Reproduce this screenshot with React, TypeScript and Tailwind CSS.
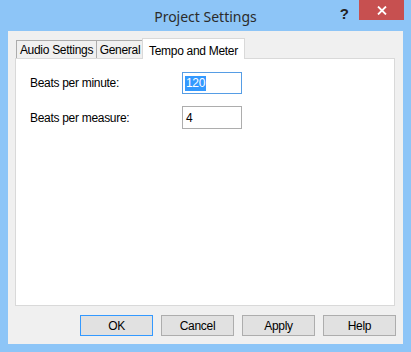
import React from 'react';

const ui = { fontFamily: '"Liberation Sans", Arial, sans-serif' };

const Tab = ({ label, active, w }: { label: string; active?: boolean; w: string }) =>
  active ? (
    <div className={`${w} h-[21px] -mb-px -ml-[2px] -mr-[2px] relative z-10 bg-white border border-b-0 border-[#d9d9d9] flex items-start justify-center pt-[3px] text-[12px] text-black`}>
      {label}
    </div>
  ) : (
    <div className={`${w} h-[18px] mt-[2px] bg-[#f0f0f0] border border-b-0 border-[#acacac] -ml-px first:ml-0 flex items-center justify-center text-[12px] text-black`}>
      {label}
    </div>
  );

const Btn = ({ label, focus }: { label: string; focus?: boolean }) => (
  <button
    className={`w-[73px] h-[21px] bg-[#e1e1e1] border text-[12px] text-black flex items-center justify-center ${
      focus ? 'border-[#3399ff]' : 'border-[#adadad]'
    }`}
  >
    {label}
  </button>
);

export default function App() {
  return (
    <div className="w-[411px] h-[352px] bg-[#8dc5f7] flex flex-col" style={ui}>
      {/* title bar */}
      <div className="h-[31px] relative flex items-center justify-center shrink-0">
        <span className="text-[14px] text-[#2b2b2b] pt-[1px]" style={{ fontFamily: '"Noto Sans", "Open Sans", sans-serif' }}>
          Project Settings
        </span>
        <div className="absolute right-[7px] top-0 flex items-start">
          <span className="text-[15px] font-bold text-[#222] mr-[10px] mt-[3px]">?</span>
          <div className="w-[45px] h-[20px] bg-[#c75050] flex items-center justify-center">
            <svg width="10" height="9" viewBox="0 0 10 9">
              <path d="M1 0.5 L9 8.5 M9 0.5 L1 8.5" stroke="white" strokeWidth="1.8" />
            </svg>
          </div>
        </div>
      </div>

      {/* client area */}
      <div className="mx-[8px] h-[313px] bg-[#f0f0f0] flex flex-col pl-[7px] pr-[8px] pt-[7px]">
        <div className="flex pl-[1px] h-[20px] items-start" style={{ letterSpacing: '-0.3px' }}>
          <Tab label="Audio Settings" w="w-[81px]" />
          <Tab label="General" w="w-[48px]" />
          <Tab label="Tempo and Meter" w="w-[103px]" active />
        </div>
        <div className="h-[248px] bg-white border border-[#d9d9d9] flex flex-col pt-[13px] pl-[14px] gap-[12px] text-[12px] text-black" style={{ letterSpacing: '-0.3px' }}>
          <div className="flex items-center">
            <span className="w-[152px]">Beats per minute:</span>
            <div className="w-[60px] h-[22px] border border-[#569de5] flex items-center pl-[2px]">
              <span className="bg-[#3399ff] text-white px-px leading-[15px]">120</span>
            </div>
          </div>
          <div className="flex items-center">
            <span className="w-[152px]">Beats per measure:</span>
            <div className="w-[60px] h-[23px] border border-[#adadad] flex items-center pl-[3px]">4</div>
          </div>
        </div>
        <div className="flex justify-end gap-[8px] mt-[9px] -mr-px" style={{ letterSpacing: '-0.3px' }}>
          <Btn label="OK" focus />
          <Btn label="Cancel" />
          <Btn label="Apply" />
          <Btn label="Help" />
        </div>
      </div>
    </div>
  );
}
